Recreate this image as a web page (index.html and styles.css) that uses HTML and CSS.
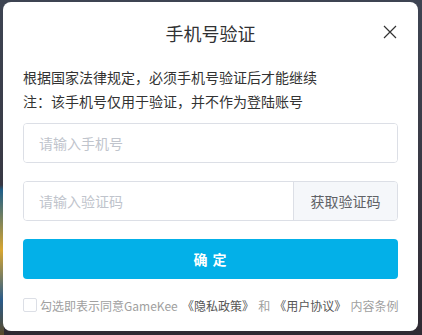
FILE: index.html
```html
<!DOCTYPE html>
<html lang="zh-CN">
<head>
<meta charset="utf-8">
<title>手机号验证</title>
<link rel="stylesheet" href="styles.css">
</head>
<body>
<div class="backdrop">
  <div class="modal">
    <div class="header">
      <h2 class="title">手机号验证</h2>
      <button class="close" aria-label="关闭">
        <svg width="16" height="16" viewBox="0 0 16 16"><path d="M2 2L14 14M14 2L2 14" stroke="#333" stroke-width="1.2" fill="none"/></svg>
      </button>
    </div>
    <div class="body">
      <p class="notice">根据国家法律规定，必须手机号验证后才能继续</p>
      <p class="notice">注：该手机号仅用于验证，并不作为登陆账号</p>
      <div class="field"><input class="input" type="text" placeholder="请输入手机号"></div>
      <div class="field group"><input class="input" type="text" placeholder="请输入验证码"><button class="append">获取验证码</button></div>
      <button class="submit">确 定</button>
      <label class="agree"><span class="checkbox"></span><span class="agree-text">勾选即表示同意GameKee <a class="link">《隐私政策》</a> 和 <a class="link">《用户协议》</a> 内容条例</span></label>
    </div>
  </div>
</div>
</body>
</html>
```
FILE: styles.css
```css
* { box-sizing: border-box; }
html, body { margin: 0; padding: 0; }
body {
  width: 422px;
  height: 335px;
  overflow: hidden;
  font-family: "Noto Sans CJK SC", "Noto Sans", sans-serif;
  background: linear-gradient(180deg, #3d4452 0%, #3a3c48 40%, #2f2a33 100%);
}
.backdrop {
  padding: 2px 0 0 3px;
  background:
    linear-gradient(180deg, transparent 0, transparent 185px, #1f5f88 190px, #d8a630 250px, #2a5b8a 300px, #5a4a2a 335px) left/4px 100% no-repeat;
  height: 335px;
}
.modal {
  width: 415px;
  height: 329px;
  background: #fff;
  border-radius: 8px;
  position: relative;
}
.header {
  padding-top: 19px;
  text-align: center;
}
.title {
  margin: 0;
  font-size: 18px;
  line-height: 24px;
  font-weight: 400;
  color: #303133;
}
.close {
  position: absolute;
  top: 22px;
  right: 20px;
  width: 16px;
  height: 16px;
  padding: 0;
  border: 0;
  background: none;
  display: flex;
}
.body {
  padding: 20px 20px 0 20px;
  display: flex;
  flex-direction: column;
}
.notice {
  margin: 0;
  font-size: 14px;
  line-height: 24px;
  color: #333;
}
.field {
  display: flex;
  height: 40px;
  margin-top: 18px;
  border: 1px solid #dcdfe6;
  border-radius: 4px;
  overflow: hidden;
}
.notice + .notice + .field { margin-top: 10px; }
.input {
  flex: 1;
  min-width: 0;
  border: 0;
  outline: none;
  padding: 0 15px;
  font-family: inherit;
  font-size: 14px;
  color: #333;
  background: #fff;
}
.input::placeholder { color: #c0c4cc; }
.append {
  width: 104px;
  border: 0;
  border-left: 1px solid #dcdfe6;
  background: #f5f7fa;
  font-family: inherit;
  font-size: 14px;
  color: #606266;
  padding: 0;
}
.submit {
  margin-top: 18px;
  height: 40px;
  border: 0;
  border-radius: 4px;
  background: #03b0e8;
  color: #fff;
  font-family: inherit;
  font-size: 14px;
  font-weight: 700;
  letter-spacing: 1px;
}
.agree {
  margin-top: 16px;
  display: flex;
  align-items: center;
  height: 20px;
  gap: 3px;
  font-size: 12px;
  color: #a0a0a0;
  white-space: nowrap;
}
.agree-text { word-spacing: 1.5px; }
.checkbox {
  width: 14px;
  height: 14px;
  border: 1px solid #dcdfe6;
  border-radius: 2px;
  background: #fff;
  flex: none;
}
.link { color: #555; }
```
